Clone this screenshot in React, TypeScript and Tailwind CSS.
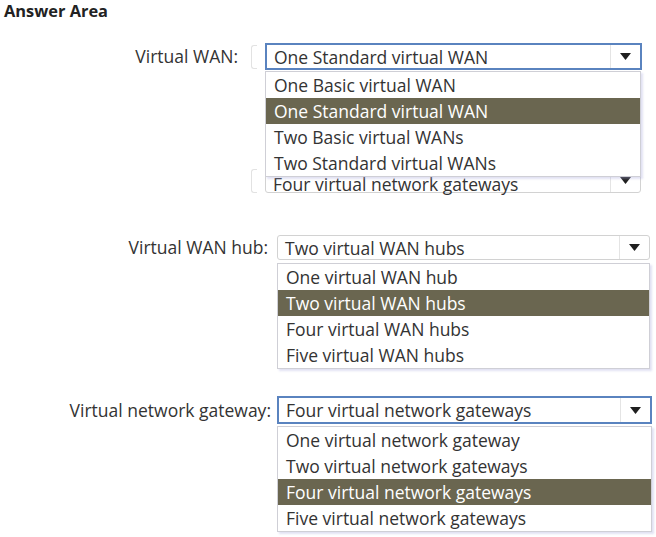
const FONT = { fontFamily: '"Open Sans", "Liberation Sans", sans-serif' };

function Arrow() {
  return (
    <div className="flex h-full w-[30px] items-center justify-center border-l border-[#e4e4e4]">
      <svg width="11" height="7" viewBox="0 0 11 7">
        <polygon points="0,0 11,0 5.5,7" fill="#1f1f1f" />
      </svg>
    </div>
  );
}

function Select({
  value,
  focused,
  className,
  textClass = "",
}: {
  value: string;
  focused?: boolean;
  className: string;
  textClass?: string;
}) {
  return (
    <div
      className={`flex items-center bg-white ${
        focused ? "border-2 border-[#5a83bf]" : "rounded-[3px] border border-[#d2d2d2]"
      } ${className}`}
    >
      <span className={`flex-1 whitespace-nowrap pl-[7px] text-[17.5px] leading-[24px] text-[#333] ${textClass}`}>
        {value}
      </span>
      <Arrow />
    </div>
  );
}

function List({
  items,
  selected,
  className,
}: {
  items: string[];
  selected: number;
  className: string;
}) {
  return (
    <div
      className={`relative z-10 border border-[#cfcfd6] bg-white shadow-[2px_2px_2px_rgba(170,170,220,0.35)] ${className}`}
    >
      {items.map((t, i) => (
        <div
          key={t}
          className={`h-[26px] whitespace-nowrap pl-[8px] text-[17.5px] leading-[26px] ${
            i === selected ? "bg-[#6a6650] text-white" : "text-[#333]"
          }`}
        >
          {t}
        </div>
      ))}
    </div>
  );
}

export default function App() {
  return (
    <div className="h-[537px] w-[656px] overflow-hidden bg-white" style={FONT}>
      <div className="h-[22px] pl-[4px] text-[16.4px] font-bold leading-[22px] text-[#222]">Answer Area</div>

      {/* Virtual WAN */}
      <div className="mt-[21px] flex h-[27px] items-center">
        <div className="w-[238px] whitespace-nowrap text-right text-[17.5px] text-[#333]">Virtual WAN:</div>
        <div className="ml-[13px] h-[24px] w-[6px] rounded-l-[3px] border border-r-0 border-[#e2e2e2]" />
        <Select value="One Standard virtual WAN" focused className="ml-[8px] h-[27px] w-[377px]" />
      </div>
      <List
        items={["One Basic virtual WAN", "One Standard virtual WAN", "Two Basic virtual WANs", "Two Standard virtual WANs"]}
        selected={1}
        className="ml-[265px] mt-[1px] w-[376px]"
      />
      <div className="mt-[-9px] flex h-[25px] items-end">
        <div className="ml-[251px] h-[24px] w-[6px] rounded-l-[3px] border border-r-0 border-[#e2e2e2]" />
        <Select
          value="Four virtual network gateways"
          className="ml-[8px] h-[25px] w-[376px]"
          textClass="pt-[6px]"
        />
      </div>

      {/* Virtual WAN hub */}
      <div className="mt-[42px] flex h-[25px] items-center">
        <div className="w-[268px] whitespace-nowrap text-right text-[17.5px] text-[#333]">Virtual WAN hub:</div>
        <Select value="Two virtual WAN hubs" className="ml-[9px] h-[25px] w-[373px]" />
      </div>
      <List
        items={["One virtual WAN hub", "Two virtual WAN hubs", "Four virtual WAN hubs", "Five virtual WAN hubs"]}
        selected={1}
        className="ml-[277px] mt-[3px] w-[373px]"
      />

      {/* Virtual network gateway */}
      <div className="mt-[27px] flex h-[28px] items-center">
        <div className="w-[271px] whitespace-nowrap text-right text-[17.5px] text-[#333]">Virtual network gateway:</div>
        <Select value="Four virtual network gateways" focused className="ml-[6px] h-[28px] w-[375px]" />
      </div>
      <List
        items={[
          "One virtual network gateway",
          "Two virtual network gateways",
          "Four virtual network gateways",
          "Five virtual network gateways",
        ]}
        selected={2}
        className="ml-[277px] mt-[2px] w-[375px]"
      />
    </div>
  );
}
